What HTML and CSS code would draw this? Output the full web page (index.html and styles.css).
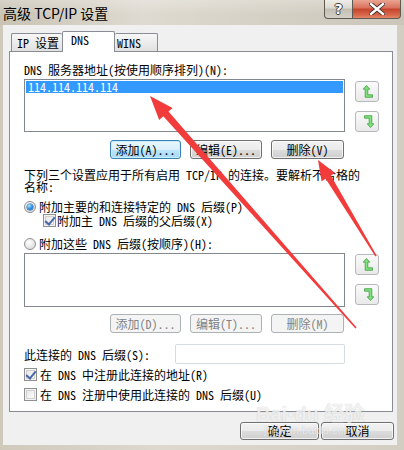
FILE: index.html
```html
<!DOCTYPE html>
<html lang="zh-CN">
<head>
<meta charset="utf-8">
<title>高级 TCP/IP 设置</title>
<link rel="stylesheet" href="styles.css">
</head>
<body>
<div class="window">
  <div class="titlebar">
    <span class="title">高级 TCP/IP 设置</span>
    <div class="caption">
      <div class="cap help"><span>?</span></div>
      <div class="cap close">
        <svg width="16" height="12" viewBox="0 0 16 12"><path d="M2 1 L14 11 M14 1 L2 11" stroke="#3a2a28" stroke-width="4.2" stroke-linecap="square"/><path d="M2 1 L14 11 M14 1 L2 11" stroke="#ffffff" stroke-width="2.4" stroke-linecap="square"/></svg>
      </div>
    </div>
  </div>
  <div class="client">
    <div class="tabs">
      <div class="tab t1">IP 设置</div>
      <div class="tab t2 active">DNS</div>
      <div class="tab t3">WINS</div>
    </div>
    <div class="panel">
      <div class="label">DNS 服务器地址(按使用顺序排列)(N):</div>
      <div class="list-row">
        <div class="listbox">
          <div class="item selected">114.114.114.114</div>
        </div>
        <div class="arrows">
          <div class="arrow-btn">
            <svg width="11" height="13" viewBox="0 0 11 13"><path d="M3.5 0.5 L6.8 4.2 L4.8 4.2 L4.8 9.8 L9.5 9.8 L9.5 12.3 L2.2 12.3 L2.2 4.2 L0.2 4.2 Z" fill="#7fe07f" stroke="#3f9f3f" stroke-width="0.8" stroke-linejoin="round"/></svg>
          </div>
          <div class="arrow-btn">
            <svg class="down" width="11" height="13" viewBox="0 0 11 13"><path d="M3.5 0.5 L6.8 4.2 L4.8 4.2 L4.8 9.8 L9.5 9.8 L9.5 12.3 L2.2 12.3 L2.2 4.2 L0.2 4.2 Z" fill="#7fe07f" stroke="#3f9f3f" stroke-width="0.8" stroke-linejoin="round"/></svg>
          </div>
        </div>
      </div>
      <div class="btn-row">
        <button class="btn default w71">添加(A)...</button>
        <button class="btn w72">编辑(E)...</button>
        <button class="btn w73">删除(V)</button>
      </div>
      <div class="desc">
        <div>下列三个设置应用于所有启用 TCP/IP 的连接。要解析不合格的</div>
        <div>名称:</div>
      </div>
      <div class="opt radio-row r1">
        <span class="radio on"></span><span>附加主要的和连接特定的 DNS 后缀(P)</span>
      </div>
      <div class="opt check-row indent">
        <span class="check on"></span><span>附加主 DNS 后缀的父后缀(X)</span>
      </div>
      <div class="opt radio-row r2">
        <span class="radio"></span><span>附加这些 DNS 后缀(按顺序)(H):</span>
      </div>
      <div class="list-row list2">
        <div class="listbox tall"></div>
        <div class="arrows a2">
          <div class="arrow-btn">
            <svg width="11" height="13" viewBox="0 0 11 13"><path d="M3.5 0.5 L6.8 4.2 L4.8 4.2 L4.8 9.8 L9.5 9.8 L9.5 12.3 L2.2 12.3 L2.2 4.2 L0.2 4.2 Z" fill="#7fe07f" stroke="#3f9f3f" stroke-width="0.8" stroke-linejoin="round"/></svg>
          </div>
          <div class="arrow-btn">
            <svg class="down" width="11" height="13" viewBox="0 0 11 13"><path d="M3.5 0.5 L6.8 4.2 L4.8 4.2 L4.8 9.8 L9.5 9.8 L9.5 12.3 L2.2 12.3 L2.2 4.2 L0.2 4.2 Z" fill="#7fe07f" stroke="#3f9f3f" stroke-width="0.8" stroke-linejoin="round"/></svg>
          </div>
        </div>
      </div>
      <div class="btn-row row2">
        <button class="btn disabled w71">添加(D)...</button>
        <button class="btn disabled w72">编辑(T)...</button>
        <button class="btn disabled w73">删除(M)</button>
      </div>
      <div class="suffix-row">
        <span>此连接的 DNS 后缀(S):</span>
        <div class="textbox"></div>
      </div>
      <div class="opt check-row c1">
        <span class="check on"></span><span>在 DNS 中注册此连接的地址(R)</span>
      </div>
      <div class="opt check-row c2">
        <span class="check"></span><span>在 DNS 注册中使用此连接的 DNS 后缀(U)</span>
      </div>
    </div>
    <div class="footer">
      <button class="btn ok">确定</button>
      <button class="btn cancel">取消</button>
    </div>
  </div>

  <div class="watermark">
    <div class="wm1">Bai<span class="paw">●</span>du 经验</div>
    <div class="wm2">jingyan.baidu.com</div>
  </div>

  <svg class="annot" width="404" height="450" viewBox="0 0 404 450">
    <polygon points="150,96 172.6,107.9 168.5,111.6 356.6,327.5 355.4,328.5 163.3,116.2 159.2,119.9" fill="#f23b3b"/>
    <polygon points="318,160 335.1,173 330.9,175.5 376.6,255.6 375.4,256.4 325.7,178.7 321.5,181.2" fill="#f23b3b"/>
  </svg>
</div>
</body>
</html>
```

FILE: styles.css
```css
* {
  box-sizing: border-box;
  margin: 0;
  padding: 0;
}

html, body {
  margin: 0;
  width: 404px;
  height: 450px;
  overflow: hidden;
  background: #d5d0c3;
}

body {
  font-family: "Noto Sans Mono CJK SC", "Noto Sans CJK SC", monospace;
  font-size: 12px;
  line-height: 13px;
  color: #000;
}

.window {
  position: relative;
  width: 404px;
  height: 450px;
  background: linear-gradient(to right, #cfc9bb, #ddd9cf 40%, #d3cec2 100%);
  display: flex;
  flex-direction: column;
}

.titlebar {
  height: 25px;
  display: flex;
  align-items: flex-start;
  background:
    linear-gradient(to bottom, rgba(255,255,255,0.25), rgba(255,255,255,0) 60%),
    linear-gradient(to right, #c9c3b4, #dedad1 35%, #d4cfc3 70%, #cbc6b9);
}

.title {
  flex: 1;
  padding: 5px 0 0 3px;
  font-family: "Noto Sans CJK SC", sans-serif;
  font-size: 14px;
  line-height: 16px;
  color: #000;
}

.caption {
  display: flex;
  margin-right: 3px;
}

.cap {
  height: 19px;
  display: flex;
  align-items: center;
  justify-content: center;
  border: 1px solid #5e5a52;
  border-top: none;
}

.help {
  width: 28px;
  border-right: none;
  border-radius: 0 0 0 4px;
  background: linear-gradient(to bottom, #efede8, #dcd9d1 45%, #c3beb2 50%, #d5d1c8);
}

.help span {
  font-family: "DejaVu Sans", sans-serif;
  font-weight: bold;
  font-size: 14px;
  line-height: 14px;
  color: #fff;
  text-shadow: 1px 0 0 #3d3a36, -1px 0 0 #3d3a36, 0 1px 0 #3d3a36, 0 -1px 0 #3d3a36;
}

.close {
  width: 49px;
  border-radius: 0 0 4px 0;
  background: linear-gradient(to bottom, #e9a593, #d9705a 45%, #c4432b 50%, #d96a4d 85%, #e4886b);
}

.client {
  margin: 0 7px 0 3px;
  height: 420px;
  background: #f0f0f0;
  padding-top: 6px;
  display: flex;
  flex-direction: column;
}

.tabs {
  display: flex;
  align-items: flex-end;
  height: 20px;
  margin-left: 8px;
}

.tab {
  height: 18px;
  border: 1px solid #898c95;
  border-bottom: none;
  border-radius: 2px 2px 0 0;
  background: linear-gradient(to bottom, #f7f7f7, #ececec 50%, #e1e1e1);
  line-height: 16px;
  padding-top: 1px;
  white-space: nowrap;
}

.t1 { width: 51px; padding-left: 5px; border-right: none; }
.t3 { width: 43px; padding-left: 2px; border-left: none; }

.tab.active {
  position: relative;
  z-index: 2;
  width: 53px;
  height: 21px;
  margin-bottom: -1px;
  padding-left: 8px;
  padding-top: 0;
  line-height: 15px;
  background: #fff;
}

.panel {
  margin-left: 6px;
  width: 384px;
  height: 361px;
  border: 1px solid #898c95;
  background: #fff;
  padding: 11px 0 0 14px;
  display: flex;
  flex-direction: column;
}

.label {
  height: 13px;
}

.list-row {
  display: flex;
  gap: 10px;
  margin-top: 3px;
}

.listbox {
  width: 321px;
  height: 53px;
  border: 1px solid #828790;
  background: #fff;
  padding: 1px;
}

.listbox.tall {
  height: 54px;
}

.item {
  height: 12px;
  line-height: 12px;
  padding-left: 2px;
}

.item.selected {
  background: #3399ff;
  color: #fff;
}

.arrows {
  display: flex;
  flex-direction: column;
  gap: 9px;
  padding-top: 2px;
}

.arrows.a2 {
  padding-top: 1px;
}

.arrow-btn {
  width: 24px;
  height: 21px;
  border: 1px solid #b5b9bd;
  border-radius: 3px;
  background: linear-gradient(to bottom, #fafafa, #f2f2f2 50%, #e9e9e9);
  display: flex;
  align-items: center;
  justify-content: center;
  padding-left: 2px;
}

.arrow-btn svg.down {
  transform: rotate(180deg);
}

.btn-row {
  display: flex;
  justify-content: flex-end;
  gap: 9px;
  width: 320px;
  margin-top: 8px;
}

.btn-row.row2 {
  margin-top: 7px;
}

.btn {
  height: 19px;
  border: 1px solid #707070;
  border-radius: 3px;
  background: linear-gradient(to bottom, #f2f2f2 0%, #ebebeb 50%, #dddddd 51%, #cfcfcf 100%);
  box-shadow: inset 0 0 0 1px rgba(255,255,255,0.7);
  font: inherit;
  color: #000;
  line-height: 16px;
  text-align: center;
  padding: 0;
}

.w71 { width: 71px; }
.w72 { width: 72px; }
.w73 { width: 73px; }

.btn.default {
  border-color: #3c7fb1;
  background: linear-gradient(to bottom, #eaf6fd 0%, #d9f0fc 50%, #bee6fd 51%, #a7d9f5 100%);
  box-shadow: inset 0 0 0 1px #c5f0ff;
}

.btn.disabled {
  border-color: #adb2b5;
  background: #f4f4f4;
  box-shadow: none;
  color: #838383;
}

.desc {
  margin-top: 10px;
  display: flex;
  flex-direction: column;
}

.desc div {
  height: 12px;
  line-height: 12px;
  white-space: nowrap;
}

.opt {
  display: flex;
  align-items: center;
  height: 13px;
  white-space: nowrap;
}

.radio-row { gap: 3px; }
.radio-row.r1 { margin-top: 7px; }
.radio-row.r2 { margin-top: 10px; }

.check-row { gap: 3px; }
.check-row.indent { padding-left: 19px; gap: 1px; margin-top: 1px; }
.check-row.c1 { margin-top: 4px; }
.check-row.c2 { margin-top: 7px; }

.list2 {
  margin-top: 3px;
}

.radio {
  width: 12px;
  height: 12px;
  border-radius: 50%;
  border: 1px solid #8e8f8f;
  background: radial-gradient(circle at 40% 35%, #ffffff, #e0e0e0 70%, #cfcfcf);
  position: relative;
  flex: none;
}

.radio.on::after {
  content: "";
  position: absolute;
  left: 2px;
  top: 2px;
  width: 6px;
  height: 6px;
  border-radius: 50%;
  background: radial-gradient(circle at 35% 30%, #a9e4ff, #2a8be0 55%, #1456a8);
  box-shadow: 0 0 0 0.5px #23538f;
}

.check {
  width: 13px;
  height: 13px;
  border: 1px solid #8e8f8f;
  background: linear-gradient(135deg, #e0e0e0, #f6f6f6 60%, #ffffff);
  box-shadow: inset 0 0 0 1px #f4f4f4, inset 0 0 0 2px #d0d0d0;
  position: relative;
  flex: none;
}

.check.on::after {
  content: "";
  position: absolute;
  left: 3px;
  top: 0px;
  width: 4px;
  height: 8px;
  border-right: 2px solid #4b67a8;
  border-bottom: 2px solid #4b67a8;
  transform: rotate(40deg);
}

.suffix-row {
  display: flex;
  align-items: center;
  width: 321px;
  height: 20px;
  margin-top: 11px;
}

.textbox {
  margin-left: auto;
  width: 170px;
  height: 20px;
  border: 1px solid #d5dbe3;
  border-radius: 2px;
  background: #fff;
}

.footer {
  display: flex;
  justify-content: flex-end;
  gap: 2px;
  margin-top: 10px;
  padding-right: 3px;
}

.footer .btn {
  height: 18px;
}

.btn.ok { width: 79px; }
.btn.cancel { width: 73px; }

.watermark {
  position: absolute;
  left: 256px;
  top: 404px;
  color: rgba(255,255,255,0.75);
  text-shadow: 0 0 1px rgba(90,90,90,0.35);
  font-family: "Liberation Sans", "Noto Sans CJK SC", sans-serif;
  pointer-events: none;
}

.wm1 {
  font-size: 20px;
  line-height: 20px;
  font-weight: bold;
}

.paw {
  font-size: 12px;
  vertical-align: top;
}

.wm2 {
  font-size: 11px;
  line-height: 12px;
  padding-left: 8px;
}

.annot {
  position: absolute;
  left: 0;
  top: 0;
  pointer-events: none;
}
```
